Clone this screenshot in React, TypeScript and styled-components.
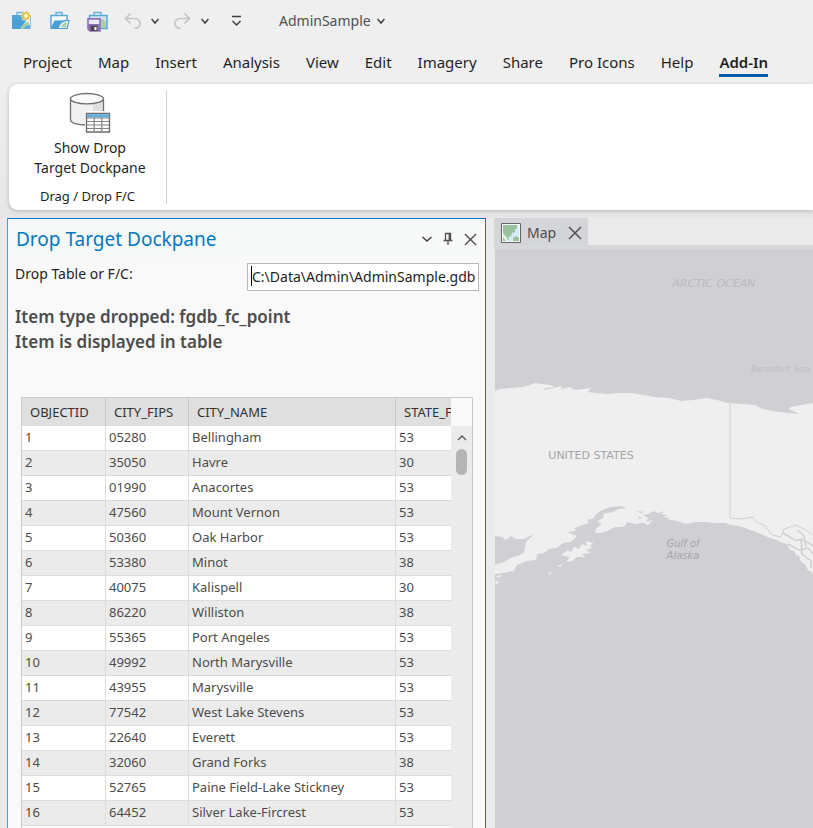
import React from "react";
import styled, { createGlobalStyle, css } from "styled-components";

const GlobalStyle = createGlobalStyle`
  *, *::before, *::after { box-sizing: border-box; }
  html, body, #root { height: 100%; }
  body {
    margin: 0;
    overflow: hidden;
    background: #eaeaea;
    color: #1f1f1f;
    font: 14px/20px "Noto Sans", "Open Sans", sans-serif;
  }
  button, input { font: inherit; color: inherit; }
`;

const Window = styled.div`
  display: flex;
  flex-direction: column;
  height: 100vh;
  overflow: hidden;
`;

const Header = styled.header`
  background: #efefef;
`;

const PlainButton = styled.button`
  display: inline-flex;
  align-items: center;
  justify-content: center;
  padding: 0;
  border: 0;
  background: none;
  cursor: pointer;
`;

const QuickBar = styled.div`
  display: flex;
  align-items: center;
  height: 42px;
  padding-left: 11px;
`;

const QuickGroup = styled.div<{ $gap: number; $before?: number }>`
  display: flex;
  align-items: center;
  gap: ${(p) => p.$gap}px;
  margin-left: ${(p) => p.$before ?? 0}px;
`;

const ProjectMenu = styled(PlainButton)`
  gap: 6px;
  margin-left: 37px;
  color: #505050;
`;

const Tabs = styled.nav`
  display: flex;
  gap: 26px;
  height: 42px;
  padding: 9px 0 0 23px;
`;

const Tab = styled.a<{ $active?: boolean }>`
  height: 26px;
  font-size: 15px;
  line-height: 23px;
  color: #1f1f1f;
  text-decoration: none;
  white-space: nowrap;
  ${(p) =>
    p.$active &&
    css`
      font-weight: 600;
      border-bottom: 3px solid #005fad;
    `}
`;

const RibbonArea = styled.div`
  padding: 0 0 8px 9px;
  background: linear-gradient(#efefef, #e6e6e6);
`;

const Ribbon = styled.section`
  display: flex;
  height: 126px;
  padding: 6px 0;
  background: #fff;
  border-radius: 9px 0 0 9px;
  box-shadow: 0 1px 4px #00000038;
`;

const RibbonGroup = styled.div`
  display: flex;
  flex-direction: column;
  align-items: center;
  justify-content: space-between;
  width: 158px;
  border-right: 1px solid #d2d2d2;
`;

const LargeButton = styled(PlainButton)`
  flex-direction: column;
  gap: 4px;
  padding: 2px 0 0 5px;
`;

const GroupLabel = styled.div`
  font-size: 13px;
  line-height: 16px;
`;

const Workspace = styled.main`
  display: grid;
  grid-template-columns: 479px minmax(0, 1fr);
  column-gap: 8px;
  flex: 1;
  min-height: 0;
  padding-left: 7px;
`;

const Pane = styled.section`
  display: flex;
  flex-direction: column;
  min-height: 0;
  background: #f9f9f9;
  border: 1px solid #0079c1;
  border-left-color: #4f9fce;
  border-bottom: 0;
`;

const PaneHeader = styled.div`
  display: flex;
  align-items: center;
  height: 38px;
  padding: 2px 8px 0;
  background: #f7f9f8;
`;

const PaneTitle = styled.h1`
  flex: 1;
  margin: 0;
  font-size: 19px;
  line-height: 26px;
  font-weight: 400;
  color: #0079c1;
`;

const PaneTools = styled.div`
  display: flex;
  align-items: center;
  gap: 11px;
`;

const DropField = styled.div`
  display: grid;
  grid-template-columns: 232px minmax(0, 1fr);
  padding: 6px 6px 0 7px;
`;

const DropLabel = styled.label`
  line-height: 22px;
`;

const InputWrap = styled.div`
  position: relative;
`;

const PathInput = styled.input`
  display: block;
  width: 100%;
  height: 28px;
  padding: 0 0 2px 4px;
  border: 1px solid #b9b9be;
  border-radius: 0;
  background: #fff;
  outline: 0;
`;

const Caret = styled.span`
  position: absolute;
  left: 4px;
  top: 3px;
  width: 1px;
  height: 20px;
  background: #000;
`;

const Message = styled.p`
  margin: 13px 7px 43px;
  font-size: 17px;
  line-height: 25px;
  font-weight: 600;
  color: #4c4c4c;
`;

const GridFrame = styled.div`
  display: flex;
  flex: 1;
  min-height: 0;
  margin: 0 12px 0 13px;
  border: 1px solid #cacaca;
  border-bottom: 0;
`;

const GridView = styled.div`
  flex: 1;
  min-width: 0;
  overflow: hidden;
`;

const Table = styled.table`
  width: 500px;
  table-layout: fixed;
  border-collapse: separate;
  border-spacing: 0;
  font-size: 13px;
`;

const Col = styled.col<{ $w: number }>`
  width: ${(p) => p.$w}px;
`;

const Th = styled.th`
  height: 28px;
  padding: 0 8px;
  border-right: 1px solid #c8c8c8;
  background: #dfdfdf;
  color: #323232;
  font-weight: 400;
  text-align: left;
  white-space: nowrap;
`;

const Td = styled.td`
  height: 25px;
  padding: 0 3px 2px;
  border-right: 1px solid #dcdcdc;
  border-bottom: 1px solid #dcdcdc;
  color: #4c4c4c;
  white-space: nowrap;
`;

const Row = styled.tr`
  background: #fff;
  &:nth-child(even) { background: #ebebeb; }
`;

const ScrollColumn = styled.div`
  display: flex;
  flex-direction: column;
  width: 21px;
  padding-top: 28px;
`;

const ScrollTrack = styled.div`
  display: flex;
  flex: 1;
  flex-direction: column;
  align-items: center;
  background: #ebebeb;
`;

const ScrollButton = styled(PlainButton)`
  width: 20px;
  height: 23px;
`;

const Thumb = styled.div`
  width: 11px;
  height: 26px;
  border-radius: 6px;
  background: #b4b4b4;
`;

const MapPane = styled.section`
  display: flex;
  flex-direction: column;
  min-width: 0;
  min-height: 0;
`;

const MapTabs = styled.div`
  display: flex;
  border-bottom: 4px solid #d6d7db;
`;

const MapTab = styled.div`
  display: flex;
  align-items: center;
  gap: 6px;
  height: 27px;
  padding: 2px 6px 0 7px;
  background: #d4d5d9;
  color: #4c4c4c;
`;

const MapName = styled.span`
  margin-right: 6px;
`;

const MapSurface = styled.div`
  flex: 1;
  min-height: 0;
  margin-left: 1px;
  overflow: hidden;
  background: #d0cfd4;
`;

const MapDrawing = styled.svg`
  display: block;
  width: 100%;
  height: 100%;
`;

const Chevron = ({ size = 8, up = false, color = "#404040" }: { size?: number; up?: boolean; color?: string }) => (
  <svg width={size} height={size} viewBox={`0 0 ${size} ${size}`} fill="none" stroke={color} strokeWidth="1.5" aria-hidden="true">
    <path
      d={
        up
          ? `M1 ${size / 2 + 2} L${size / 2} ${size / 2 - 2} L${size - 1} ${size / 2 + 2}`
          : `M0.500 ${size / 2 - 2} L${size / 2} ${size / 2 + 2} L${size - 0.5} ${size / 2 - 2}`
      }
    />
  </svg>
);

const Cross = ({ size }: { size: number }) => (
  <svg width={size} height={size} viewBox="0 0 14 14" fill="none" stroke="#505050" strokeWidth="1.5" aria-hidden="true">
    <path d="M1 1 13 13M13 1 1 13" />
  </svg>
);

const NewProjectIcon = () => (
  <svg width="22" height="20" viewBox="0 0 22 20" aria-hidden="true">
    <path d="M1.500 17.500V4.500h18v13z" fill="#f5f5f2" stroke="#8fc3e6" />
    <path d="M6 4V1.500h6V4" fill="none" stroke="#75b4df" strokeWidth="1.400" />
    <path d="M1 4h9l2 4-3 2-8-3z" fill="#54a5d9" />
    <path d="M1 7c5 0 7 3 12 2l2 1-6 8H1z" fill="#4b9fd7" />
    <path d="M10 17c2-4 4-6 8-6v6z" fill="#a6cfab" />
    <path d="M13 18c1-3 3-4 6-4v4z" fill="#63addd" />
    <path d="M15 0v10M10 5h10M11.500 1.500l7 7M18.500 1.500l-7 7" stroke="#ecca5a" strokeWidth="1.500" />
    <circle cx="15" cy="5" r="2.800" fill="#fff4b9" stroke="#e5bd39" strokeWidth="1.300" />
  </svg>
);

const OpenProjectIcon = () => (
  <svg width="22" height="20" viewBox="0 0 22 20" aria-hidden="true">
    <path d="M2 17.500V4.500h16V9" fill="#f6f8f8" stroke="#58a7da" strokeWidth="1.500" />
    <path d="M7 4V1.600h6V4" fill="none" stroke="#6fb1de" strokeWidth="1.500" />
    <path d="M1.500 18 5.500 9.500H13L16 9h4.800L18.500 18z" fill="#4b9fd7" />
    <path d="M10 17c1-5 4-7 9.500-7l-2 7z" fill="#eef0df" />
    <path d="M12 16c1-3 3-4.500 6-4.500l-1.500 5z" fill="#a6cfab" />
  </svg>
);

const SaveProjectIcon = () => (
  <svg width="22" height="21" viewBox="0 0 22 21" aria-hidden="true">
    <path d="M2.500 8V4.500h17.500V17.500H13" fill="#cfe4f1" stroke="#58a7da" strokeWidth="1.500" />
    <path d="M7 4V1.600h7V4" fill="none" stroke="#6fb1de" strokeWidth="1.500" />
    <path d="M14 8c3 0 4 2 5 4v5h-5z" fill="#a6cfab" />
    <path d="M1 7.800h12v12H3l-2-2z" fill="#efe9f7" stroke="#8d74b9" strokeWidth="1.700" />
    <path d="M1 13h12v6.500H3l-2-2z" fill="#8d74b9" />
    <path d="M3.500 14.500h7V20h-7z" fill="#4b4b50" />
    <path d="M7.500 16h2v3h-2z" fill="#fff" />
  </svg>
);

const UndoIcon = ({ redo = false }: { redo?: boolean }) => (
  <svg width="18" height="18" viewBox="0 0 18 18" fill="none" stroke="#c6c6c6" strokeWidth="1.700" aria-hidden="true">
    <path
      d={
        redo
          ? "M11.500 1.500 16.500 6.500 11.500 11.500M16 6.500H7A5 5 0 0 0 2 11.500C2 14.500 4 16 7.500 16.500"
          : "M6.500 1.500 1.500 6.500 6.500 11.500M2 6.500H11A5 5 0 0 1 16 11.500C16 14.500 14 16 10.500 16.500"
      }
    />
  </svg>
);

const CustomizeIcon = () => (
  <svg width="11" height="12" viewBox="0 0 11 12" fill="none" stroke="#404040" strokeWidth="1.500" aria-hidden="true">
    <path d="M1 1.500H10M1.500 6 5.500 10 9.500 6" />
  </svg>
);

const PinIcon = () => (
  <svg width="10" height="14" viewBox="0 0 10 14" fill="none" stroke="#505050" strokeWidth="1.300" aria-hidden="true">
    <path d="M2.500 8V1.500h5V8M0.500 8.500h9M5 8.500V13" />
    <path d="M6.500 1.500V8" strokeWidth="1.800" />
  </svg>
);

const DatabaseIcon = () => (
  <svg width="42" height="42" viewBox="0 0 42 42" aria-hidden="true">
    <path d="M1.500 6.500v21c0 3.500 7 5.500 17 5.500s16-2 16-5.500V6.500z" fill="#f1f1f1" />
    <path d="M24 11c6-1 9-2 10.500-4V22H24z" fill="#dfdfdf" />
    <path d="M34.500 20V6.500M1.500 6.500v21c0 3.500 7 5.500 15.500 5.500" fill="none" stroke="#6e6e6e" strokeWidth="1.300" />
    <ellipse cx="18" cy="6.700" rx="16.500" ry="5.200" fill="#fafafa" stroke="#6e6e6e" strokeWidth="1.300" />
    <path d="M16 19H42V42H16z" fill="#fff" />
    <path d="M17.500 21.500h23v18.500h-23z" fill="#fff" stroke="#6e6e6e" strokeWidth="1.400" />
    <path d="M18.200 22.200h21.600v3.300H18.200z" fill="#60aee0" />
    <path d="M18 26h22M18 29.500h22M18 33h22M18 36.500h22M25.200 26v14M32.800 26v14" stroke="#858585" strokeWidth="1.200" />
  </svg>
);

const MapIcon = () => (
  <svg width="20" height="20" viewBox="0 0 20 20" aria-hidden="true">
    <path d="M0.500 0.500h19v19h-19z" fill="#f2faf6" stroke="#646464" />
    <path d="M2 2h16v16H2z" fill="#d3ebf9" />
    <path d="M2 2h14v3l-2 2v2l-3 1-1 3-2 1-1-2 1 5H2z" fill="#9ac19c" />
    <path d="M2 10l4 5 1 3H2z" fill="#e9f3de" />
    <path d="M2 14l3 4H2zM12 15l3-2 3 2v3h-6z" fill="#9ac19c" />
  </svg>
);

const Basemap = () => (
  <MapDrawing viewBox="0 0 318 579" preserveAspectRatio="xMinYMin slice" role="img" aria-label="Basemap of Alaska">
    <g fill="#efefef">
      <path
        d="M0 142 5 140 16 139 28 138 35 136 40 134 47 135 55 136 60 138 50 139 49 141 58 139 67 137 66 140 75 138 79 141 88 140 96 139 93 143 101 144 111 145 125 144 137 144 148 146 160 148 175 149 186 152 198 151 212 149 222 151 232 154 248 155 260 156 268 160 278 162 292 164 304 165 294 160 296 158 306 156 318 154
        V324L313 321 310 315 306 313 304 307 301 306 299 302 295 301 292 295 288 294 282 291 275 289 266 285 258 282 250 279 244 277 235 276 231 274 220 274 211 273 200 273 191 275 182 272 171 270 164 270 158 274 152 276 150 274 146 274 140 275 132 273 130 277 126 278 120 278 112 282 106 284 100 284 101 280 107 274 102 273 109 268 108 265 118 263 124 260 132 259 126 257 116 258 107 261 101 265 99 269 92 271 94 274 87 276 79 279 81 282 72 283 82 287 76 293 68 294 62 299 54 300 49 304 42 305 41 311 32 312 22 316 19 322 8 324 0 325
        V316L9 313 16 309 25 306 29 303 31 293 39 285 29 290 21 290 16 287 11 291 7 288 0 287Z"
      />
      <path d="M66 306 73 301 76 303 79 298 84 300 87 295 92 297 91 292 97 294 99 293 95 297 97 299 91 301 96 304 87 305 90 308 81 308 78 312 71 313 75 308Z" />
      <path d="M53 324 57 323 55 326ZM62 317 69 315 65 318ZM1 327 8 326 3 329ZM0 332 5 333 1 335Z" />
    </g>
    <g fill="#d0cfd4">
      <path d="M148 266 154 265 158 262 163 264 170 262 166 265 173 266 168 268 176 269 168 271 161 274 154 275 158 271 151 273 153 269Z" />
      <path d="M141 262 150 263 146 264ZM143 268 148 269 144 270Z" />
    </g>
    <g fill="none" stroke="#d0cfd4" strokeWidth="1.500">
      <path d="M235 155V269L245 270 258 268 260 272 270 277 277 286 286 288 289 280 301 276 311 281 318 286" strokeWidth="1" />
      <path d="M288 284 300 291 309 291 318 297M302 281 309 287 311 298M293 295 304 301 313 299 318 305M306 289 307 305 316 312 316 319" />
    </g>
    <g fill="#a5a5a8" fontFamily="'DejaVu Sans', sans-serif" textAnchor="middle">
      <text x="96" y="210" fontSize="11">UNITED STATES</text>
      <text x="219" y="38" fontSize="11" fontStyle="italic" opacity="0.500">ARCTIC OCEAN</text>
      <text x="256" y="123" fontSize="9" fontStyle="italic" textAnchor="start" opacity="0.400">Beaufort Sea</text>
      <text x="188" y="298" fontSize="10" fontStyle="italic">Gulf of</text>
      <text x="188" y="310" fontSize="10" fontStyle="italic">Alaska</text>
    </g>
  </MapDrawing>
);

const tabs = ["Project", "Map", "Insert", "Analysis", "View", "Edit", "Imagery", "Share", "Pro Icons", "Help", "Add-In"];

const columns = [
  { name: "OBJECTID", width: 84 },
  { name: "CITY_FIPS", width: 83 },
  { name: "CITY_NAME", width: 207 },
  { name: "STATE_FIPS", width: 126 },
];

const cities = [
  ["05280", "Bellingham", "53"],
  ["35050", "Havre", "30"],
  ["01990", "Anacortes", "53"],
  ["47560", "Mount Vernon", "53"],
  ["50360", "Oak Harbor", "53"],
  ["53380", "Minot", "38"],
  ["40075", "Kalispell", "30"],
  ["86220", "Williston", "38"],
  ["55365", "Port Angeles", "53"],
  ["49992", "North Marysville", "53"],
  ["43955", "Marysville", "53"],
  ["77542", "West Lake Stevens", "53"],
  ["22640", "Everett", "53"],
  ["32060", "Grand Forks", "38"],
  ["52765", "Paine Field-Lake Stickney", "53"],
  ["64452", "Silver Lake-Fircrest", "53"],
];

export default function App() {
  return (
    <Window>
      <GlobalStyle />
      <Header>
        <QuickBar>
          <QuickGroup $gap={16}>
            <PlainButton aria-label="New project"><NewProjectIcon /></PlainButton>
            <PlainButton aria-label="Open project"><OpenProjectIcon /></PlainButton>
            <PlainButton aria-label="Save project"><SaveProjectIcon /></PlainButton>
          </QuickGroup>
          <QuickGroup $gap={9} $before={15}>
            <PlainButton aria-label="Undo"><UndoIcon /></PlainButton>
            <PlainButton aria-label="Undo history"><Chevron /></PlainButton>
          </QuickGroup>
          <QuickGroup $gap={10} $before={14}>
            <PlainButton aria-label="Redo"><UndoIcon redo /></PlainButton>
            <PlainButton aria-label="Redo history"><Chevron /></PlainButton>
          </QuickGroup>
          <QuickGroup $gap={0} $before={22}>
            <PlainButton aria-label="Customize quick access"><CustomizeIcon /></PlainButton>
          </QuickGroup>
          <ProjectMenu>AdminSample<Chevron /></ProjectMenu>
        </QuickBar>
        <Tabs>
          {tabs.map((name) => (
            <Tab key={name} href="#" $active={name === "Add-In"}>{name}</Tab>
          ))}
        </Tabs>
      </Header>
      <RibbonArea>
        <Ribbon>
          <RibbonGroup>
            <LargeButton>
              <DatabaseIcon />
              <span>Show Drop<br />Target Dockpane</span>
            </LargeButton>
            <GroupLabel>Drag / Drop F/C</GroupLabel>
          </RibbonGroup>
        </Ribbon>
      </RibbonArea>
      <Workspace>
        <Pane>
          <PaneHeader>
            <PaneTitle>Drop Target Dockpane</PaneTitle>
            <PaneTools>
              <PlainButton aria-label="Pane options"><Chevron size={10} /></PlainButton>
              <PlainButton aria-label="Auto hide"><PinIcon /></PlainButton>
              <PlainButton aria-label="Close pane"><Cross size={13} /></PlainButton>
            </PaneTools>
          </PaneHeader>
          <DropField>
            <DropLabel htmlFor="path">Drop Table or F/C:</DropLabel>
            <InputWrap>
              <PathInput id="path" defaultValue="C:\Data\Admin\AdminSample.gdb" />
              <Caret />
            </InputWrap>
          </DropField>
          <Message>
            Item type dropped: fgdb_fc_point
            <br />
            Item is displayed in table
          </Message>
          <GridFrame>
            <GridView>
              <Table>
                <colgroup>
                  {columns.map((c) => <Col key={c.name} $w={c.width} />)}
                </colgroup>
                <thead>
                  <tr>{columns.map((c) => <Th key={c.name} scope="col">{c.name}</Th>)}</tr>
                </thead>
                <tbody>
                  {cities.map((city, i) => (
                    <Row key={city[0]}>
                      <Td>{i + 1}</Td>
                      {city.map((value, j) => <Td key={j}>{value}</Td>)}
                    </Row>
                  ))}
                </tbody>
              </Table>
            </GridView>
            <ScrollColumn>
              <ScrollTrack>
                <ScrollButton aria-label="Scroll up"><Chevron size={10} up color="#606060" /></ScrollButton>
                <Thumb />
              </ScrollTrack>
            </ScrollColumn>
          </GridFrame>
        </Pane>
        <MapPane>
          <MapTabs>
            <MapTab>
              <MapIcon />
              <MapName>Map</MapName>
              <PlainButton aria-label="Close map"><Cross size={14} /></PlainButton>
            </MapTab>
          </MapTabs>
          <MapSurface><Basemap /></MapSurface>
        </MapPane>
      </Workspace>
    </Window>
  );
}
